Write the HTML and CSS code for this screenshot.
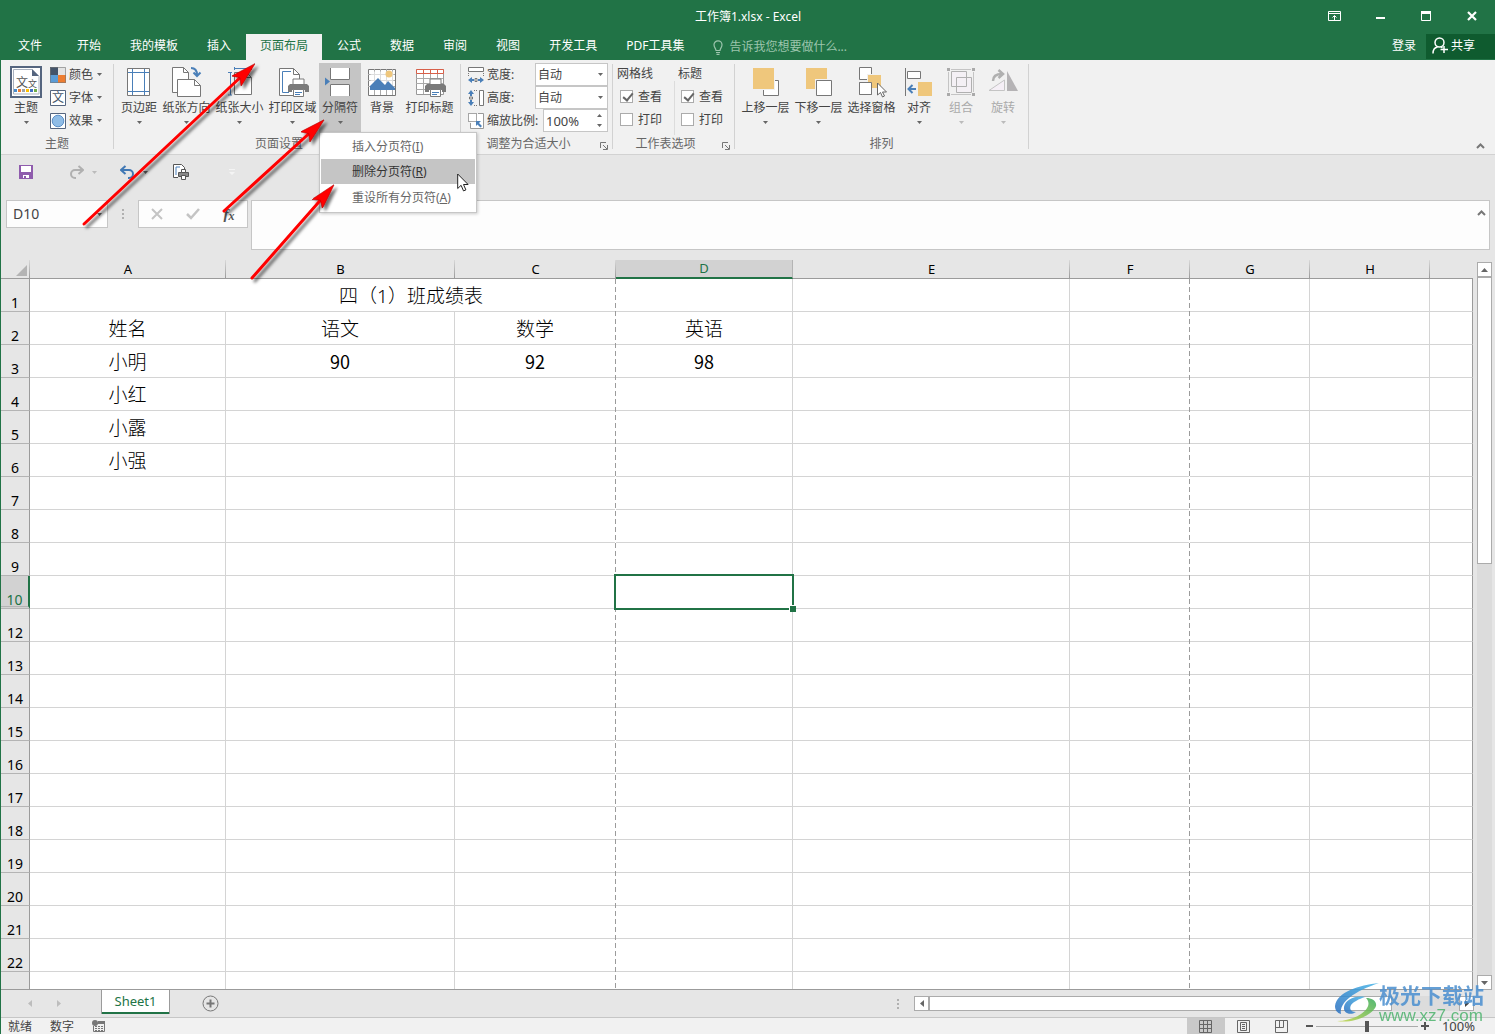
FILE: index.html
```html
<!DOCTYPE html>
<html lang="zh-CN">
<head>
<meta charset="utf-8">
<title>工作簿1.xlsx - Excel</title>
<link rel="stylesheet" href="styles.css">
</head>
<body>
<svg class="defs" aria-hidden="true">
  <symbol id="caret" viewBox="0 0 5 3"><path d="M0 0h5L2.500 3z"/></symbol>
  <symbol id="printer" viewBox="0 0 21 19">
    <path d="M5 1h11v6H5z" fill="#fff" stroke="#7a7a7a"/>
    <path d="M2 6h17l2 2v6h-4v-2H4v2H0V8z" fill="#7a7a7a"/>
    <path d="M5.500 11.500h10v7h-10z" fill="#fff" stroke="#7a7a7a"/>
    <path d="M7 14.500h7M7 16.500h5" stroke="#4a7fb8"/>
  </symbol>
  <symbol id="launcher" viewBox="0 0 8 8"><path d="M.5 6V.5H6M3 3l4 4M7.500 3v4.500H3" fill="none" stroke="#777"/></symbol>
  <symbol id="pointer" viewBox="0 0 12 19"><path d="M.7 1v14.500l3.400-3.200 2.400 5.600 2.400-1-2.400-5.400h4.600z" fill="#fff" stroke="#222"/></symbol>
  <symbol id="chevron" viewBox="0 0 9 6"><path d="M1 5l3.500-3.500L8 5" fill="none" stroke="#777" stroke-width="2"/></symbol>
</svg>

<div class="window">
  <header class="titlebar">
    <h1 class="title">工作簿1.xlsx - Excel</h1>
    <div class="window-buttons">
      <button aria-label="功能区显示选项"><svg width="13" height="10"><path d="M.5.500h12v9H.5zM1 2.500h11M6.500 9V5M4.500 6.500l2-2 2 2" fill="none" stroke="#fff"/></svg></button>
      <button aria-label="最小化"><svg width="9" height="10"><path d="M0 6h9v2H0z" fill="#fff"/></svg></button>
      <button aria-label="最大化"><svg width="10" height="10"><path d="M.5.500h9v9h-9z" fill="none" stroke="#fff"/><path d="M0 0h10v3H0z" fill="#fff"/></svg></button>
      <button aria-label="关闭"><svg width="10" height="10"><path d="M1 1l8 8M9 1L1 9" stroke="#fff" stroke-width="2.200"/></svg></button>
    </div>
  </header>

  <nav class="tabs">
    <button class="tab tab-file">文件</button>
    <button class="tab">开始</button>
    <button class="tab">我的模板</button>
    <button class="tab">插入</button>
    <button class="tab active">页面布局</button>
    <button class="tab">公式</button>
    <button class="tab">数据</button>
    <button class="tab">审阅</button>
    <button class="tab">视图</button>
    <button class="tab">开发工具</button>
    <button class="tab">PDF工具集</button>
    <label class="tell-me">
      <svg width="10" height="15"><path d="M3 10.500C3 8.500 1 7.500 1 4.800a4 4 0 0 1 8 0C9 7.500 7 8.500 7 10.500zM3 12.500h4M3.500 14.300h3" fill="none" stroke="#9cc5ad" stroke-width="1.200"/></svg>
      <input type="text" placeholder="告诉我您想要做什么..." aria-label="告诉我您想要做什么">
    </label>
    <button class="sign-in">登录</button>
    <button class="share"><svg width="16" height="17"><circle cx="7.500" cy="5.500" r="4.500"/><path d="M1 16.500c0-4 2-6 4.500-6.500M9 10l1.500 1M12 9v7M8.500 12.500H16"/></svg>共享</button>
  </nav>

  <section class="ribbon">
    <div class="group group-theme">
      <div class="group-body">
        <button class="big">
          <svg class="icon" viewBox="0 0 32 32"><rect x="1" y="1" width="30" height="30" fill="#fff" stroke="#55657f" stroke-width="2"/><path d="M3.500 28V3.500H22l7 7V28z" fill="#fff" stroke="#a9b1be"/><path d="M22 3v7h7z" fill="#55657f"/><text x="6" y="21" font-size="12" fill="#555">文</text><text x="18" y="21" font-size="9" fill="#555">文</text><path d="M4 23h3v3H4z" fill="#4a8ccb"/><path d="M8 23h3v3H8z" fill="#ed7d31"/><path d="M12 23h3v3h-3z" fill="#a5a5a5"/><path d="M16 23h3v3h-3z" fill="#ffc000"/><path d="M20 23h3v3h-3z" fill="#4472c4"/><path d="M24 23h3v3h-3z" fill="#70ad47"/></svg>
          <span>主题</span><svg class="caret"><use href="#caret"/></svg>
        </button>
        <div class="stack">
          <button class="small"><svg width="16" height="16"><path d="M0 0h8v8H0z" fill="#44546a"/><path d="M8 0h8v8H8z" fill="#e4e4e4"/><path d="M0 8h8v8H0z" fill="#5b9bd5"/><path d="M8 8h8v8H8z" fill="#ed7d31"/><path d="M.5.500h15v15H.5z" fill="none" stroke="#777" stroke-opacity=".6"/></svg>颜色<svg class="caret"><use href="#caret"/></svg></button>
          <button class="small"><svg width="16" height="16"><path d="M.5.500h15v15H.5z" fill="#fff" stroke="#55657f"/><text x="2" y="12" font-size="12" fill="#44546a">文</text></svg>字体<svg class="caret"><use href="#caret"/></svg></button>
          <button class="small"><svg width="16" height="16"><path d="M.5.500h15v15H.5z" fill="#fff" stroke="#55657f"/><circle cx="8" cy="8" r="5.800" fill="#8fbce6" stroke="#5b8fc7"/></svg>效果<svg class="caret"><use href="#caret"/></svg></button>
        </div>
      </div>
      <div class="group-footer"><span>主题</span></div>
    </div>
    <span class="divider"></span>

    <div class="group group-page">
      <div class="group-body">
        <button class="big"><svg class="icon" viewBox="0 0 32 32"><path d="M4.500 2.500h22v27h-22z" fill="#fff" stroke="#777"/><path d="M9.500 3v26M21.500 3v26M5 6.500h21M5 25.500h21" stroke="#4a7fb8"/></svg><span>页边距</span><svg class="caret"><use href="#caret"/></svg></button>
        <button class="big wide"><svg class="icon" viewBox="0 0 32 32"><path d="M1.500 1.500h11l5 5v20h-16z" fill="#fff" stroke="#777"/><path d="M12.500 1.500v5h5" fill="none" stroke="#777"/><path d="M6.500 13.500h17l6 6v11h-23z" fill="#fff" stroke="#777"/><path d="M23.500 13.500v6h6" fill="none" stroke="#777"/><path d="M20 2c4 0 6 2 6 7M22.500 6.500L26 10l3.500-3.500" fill="none" stroke="#4a7fb8" stroke-width="2"/></svg><span>纸张方向</span><svg class="caret"><use href="#caret"/></svg></button>
        <button class="big wide"><svg class="icon" viewBox="0 0 32 32"><path d="M10.500 6.500h12l5 5v17h-17z" fill="#fff" stroke="#777"/><path d="M22.500 6.500v5h5" fill="none" stroke="#777"/><path d="M4 6.500h4M6.500 7v22M4 29h4M10 2.500h18M10.500 1v3M27.500 1v3" fill="none" stroke="#4a7fb8"/></svg><span>纸张大小</span><svg class="caret"><use href="#caret"/></svg></button>
        <button class="big wide"><svg class="icon" viewBox="0 0 32 32"><path d="M2.500 2.500h14l6 6v21h-20z" fill="#fff" stroke="#777"/><path d="M16.500 2.500v6h6" fill="none" stroke="#777"/><path d="M14 5.500H5.500v21H12" fill="none" stroke="#4a7fb8"/><use href="#printer" x="11" y="12" width="21" height="19"/></svg><span>打印区域</span><svg class="caret"><use href="#caret"/></svg></button>
        <div class="menu-anchor">
          <button class="big pressed" aria-expanded="true"><svg class="icon" viewBox="0 0 32 32"><path d="M6 2h20v12H6zM6 18h20v12H6z" fill="#fff"/><path d="M6.500 2v11.500h19V2M6.500 30V18.500h19V30" fill="none" stroke="#777"/><path d="M1 11.500l5 4-5 4z" fill="#4a7fb8"/></svg><span>分隔符</span><svg class="caret"><use href="#caret"/></svg></button>
          <div class="menu" role="menu">
            <button role="menuitem">插入分页符(<u>I</u>)</button>
            <button role="menuitem" class="hover">删除分页符(<u>R</u>)</button>
            <button role="menuitem">重设所有分页符(<u>A</u>)</button>
            <svg class="pointer"><use href="#pointer"/></svg>
          </div>
        </div>
        <button class="big"><svg class="icon" viewBox="0 0 32 32"><path d="M2.500 3.500h27v26h-27z" fill="#fff" stroke="#777"/><path d="M8.500 3v26M14.500 3v26M20.500 3v26M26.500 3v26M2 8.500h27M2 14.500h27M2 20.500h27" stroke="#aaa"/><path d="M4.500 5.500h23v18h-23z" fill="#fff" fill-opacity=".6"/><path d="M4 24v-4l8-8 7 7 3-4 7 7v2z" fill="#4a7fb8"/><circle cx="23" cy="8" r="3.500" fill="#efc77c"/></svg><span>背景</span></button>
        <button class="big wide"><svg class="icon" viewBox="0 0 32 32"><path d="M2.500 3.500h27v25h-27z" fill="#fff" stroke="#999"/><path d="M9.500 7v21M16.500 7v21M23.500 7v21M2 12.500h27M2 17.500h27M2 23.500h27" stroke="#aaa"/><path d="M2.500 3.500h27v4h-27zM9.500 3v4M16.500 3v4M23.500 3v4" fill="#fff" stroke="#d8604a"/><use href="#printer" x="11" y="12" width="21" height="19"/></svg><span>打印标题</span></button>
      </div>
      <div class="group-footer"><span>页面设置</span><button class="launcher" aria-label="页面设置"><svg width="8" height="8"><use href="#launcher"/></svg></button></div>
    </div>
    <span class="divider"></span>

    <div class="group group-scale">
      <div class="group-body form-rows">
        <div class="form-row">
          <svg width="16" height="16"><path d="M.5.500h15v4H.5z" fill="#fff" stroke="#777"/><path d="M.5 6v4M15.500 6v4" stroke="#777" stroke-dasharray="1 1"/><path d="M0 13l4-3v2h2v2H4v2zM16 13l-4-3v2h-2v2h2v2z" fill="#4a7fb8"/><path d="M7 11.500h2v3H7z" fill="none" stroke="#777"/></svg>
          <label for="w">宽度:</label>
          <span class="combo"><select id="w"><option>自动</option></select><svg class="caret"><use href="#caret"/></svg></span>
        </div>
        <div class="form-row">
          <svg width="16" height="16"><path d="M11.500.500h4v15h-4z" fill="#fff" stroke="#777"/><path d="M6 .5h4M6 15.500h4" stroke="#777" stroke-dasharray="1 1"/><path d="M3 0L0 4h2v2h2V4h2zM3 16l-3-4h2v-2h2v2h2z" fill="#4a7fb8"/><path d="M1.500 7h3v2h-3z" fill="none" stroke="#777"/></svg>
          <label for="h">高度:</label>
          <span class="combo"><select id="h"><option>自动</option></select><svg class="caret"><use href="#caret"/></svg></span>
        </div>
        <div class="form-row">
          <svg width="16" height="16"><path d="M10 .5h5.500v15h-13V10" fill="#fff" stroke="#999"/><path d="M.5.500h8v8h-8z" fill="#fff" stroke="#555" stroke-dasharray="1 1"/><path d="M8 8h5l-2 2 3 3-1.500 1.500-3-3L8 13z" fill="#4a7fb8"/></svg>
          <label for="s">缩放比例:</label>
          <span class="spin"><input id="s" type="text" value="100%"><svg width="5" height="13"><path d="M0 3h5L2.500 0zM0 10h5l-2.500 3z" fill="#666"/></svg></span>
        </div>
      </div>
      <div class="group-footer"><span>调整为合适大小</span><button class="launcher" aria-label="调整为合适大小"><svg width="8" height="8"><use href="#launcher"/></svg></button></div>
    </div>
    <span class="divider"></span>

    <div class="group group-options">
      <div class="group-body">
        <fieldset class="checks">
          <legend>网格线</legend>
          <label><input type="checkbox" checked>查看</label>
          <label><input type="checkbox">打印</label>
        </fieldset>
        <fieldset class="checks second">
          <legend>标题</legend>
          <label><input type="checkbox" checked>查看</label>
          <label><input type="checkbox">打印</label>
        </fieldset>
      </div>
      <div class="group-footer"><span>工作表选项</span><button class="launcher" aria-label="工作表选项"><svg width="8" height="8"><use href="#launcher"/></svg></button></div>
    </div>
    <span class="divider"></span>

    <div class="group group-arrange">
      <div class="group-body">
        <button class="big wide"><svg class="icon" viewBox="0 0 32 32"><path d="M13.500 14.500h15v15h-15z" fill="#fff" stroke="#777"/><path d="M2 1h23v23H2z" fill="#f1f1f1"/><path d="M3 2h21v21H3z" fill="#efc77c"/></svg><span>上移一层</span><svg class="caret"><use href="#caret"/></svg></button>
        <button class="big wide"><svg class="icon" viewBox="0 0 32 32"><path d="M3 2h21v21H3z" fill="#efc77c"/><path d="M12 13h18v18H12z" fill="#f1f1f1"/><path d="M13.500 14.500h15v15h-15z" fill="#fff" stroke="#777"/></svg><span>下移一层</span><svg class="caret"><use href="#caret"/></svg></button>
        <button class="big wide"><svg class="icon" viewBox="0 0 32 32"><path d="M3.500 1.500h12v12h-12zM3.500 16.500h12v12h-12z" fill="#fff" stroke="#777"/><path d="M11 8h15v15H11z" fill="#f1f1f1"/><path d="M12 9h13v13H12z" fill="#efc77c"/><path d="M3.500 16.500h12v12h-12z" fill="#fff" stroke="#777"/><path d="M21.500 17v12l3-2.500 2 4.500 2-1-2-4h4z" fill="#fff" stroke="#666"/></svg><span>选择窗格</span></button>
        <button class="big"><svg class="icon" viewBox="0 0 32 32"><path d="M2.500 2v28" stroke="#777"/><path d="M4.500 5.500h13v7h-13z" fill="#fff" stroke="#777"/><path d="M15 16h14v14H15z" fill="#efc77c"/><path d="M13 23H6M9.500 19L5.500 23l4 4" fill="none" stroke="#4a7fb8" stroke-width="2"/></svg><span>对齐</span><svg class="caret"><use href="#caret"/></svg></button>
        <button class="big" disabled><svg class="icon" viewBox="0 0 32 32"><path d="M6 3.500h20M6 28.500h20M3.500 6v20M28.500 6v20" stroke="#c4c4c4"/><path d="M6.500 5.500h15v15h-15zM11.500 11.500h15v15h-15z" fill="#f5eff6" fill-opacity=".7" stroke="#b0b0b0"/><path d="M2 2h3v3H2zM27 2h3v3h-3zM2 27h3v3H2zM27 27h3v3h-3z" fill="#aaa"/></svg><span>组合</span><svg class="caret"><use href="#caret"/></svg></button>
        <button class="big" disabled><svg class="icon" viewBox="0 0 32 32"><path d="M20 5v20h11z" fill="#b5b3b5"/><path d="M17.500 14v10.500H2z" fill="#f5eff6" stroke="#c4c4c4"/><path d="M6 15C6 10 9 8 15 8M11.500 4L16 8l-4.500 4" fill="none" stroke="#b0b0b0" stroke-width="2.500"/></svg><span>旋转</span><svg class="caret"><use href="#caret"/></svg></button>
      </div>
      <div class="group-footer"><span>排列</span></div>
    </div>
    <span class="divider"></span>
    <button class="collapse" aria-label="折叠功能区"><svg width="9" height="6"><use href="#chevron"/></svg></button>
  </section>

  <div class="quick-access">
    <button aria-label="保存"><svg width="14" height="14"><path d="M0 0h14v14H0z" fill="#8f5cad"/><path d="M2 1h10v6H2zM4 10h6v3H4z" fill="#fff"/><path d="M5 11h2v2H5z" fill="#8f5cad"/></svg></button>
    <button class="redo" aria-label="重做"><svg width="15" height="14"><path d="M14 5H6a4 4 0 0 0 0 8h1M9.500 1L14 5l-4.500 4" fill="none" stroke="#b0b0b0" stroke-width="2"/></svg><svg class="caret light"><use href="#caret"/></svg></button>
    <button class="undo" aria-label="撤消"><svg width="15" height="14"><path d="M1 5h8a4 4 0 0 1 0 8H8M5.500 1L1 5l4.500 4" fill="none" stroke="#4178b4" stroke-width="2"/></svg><svg class="caret"><use href="#caret"/></svg></button>
    <button class="preview" aria-label="打印预览"><svg width="17" height="17"><path d="M5 13.500H.5V.500h8l3 3V7" fill="#fff" stroke="#555"/><path d="M3 11V3h4" fill="none" stroke="#4a7fb8"/><path d="M5.500 8.500h10v4h-10z" fill="#888" stroke="#555"/><path d="M8.500 5.500h4v3h-4zM8.500 11.500h4v4h-4z" fill="#fff" stroke="#555"/></svg></button>
    <button aria-label="自定义快速访问工具栏"><svg width="6" height="6"><path d="M0 0h6v1H0zM0 3h6L3 6z" fill="#f4f4f4"/></svg></button>
  </div>

  <div class="formula-bar">
    <span class="name-box"><input type="text" value="D10" aria-label="名称框"><svg class="caret"><use href="#caret"/></svg></span>
    <svg class="grip" width="2" height="11"><path d="M0 0h2v2H0zM0 4h2v2H0zM0 8h2v2H0z" fill="#b0b0b0"/></svg>
    <div class="formula-buttons">
      <button aria-label="取消"><svg width="12" height="12"><path d="M1 1l10 10M11 1L1 11" stroke="#c4c4c4" stroke-width="2"/></svg></button>
      <button aria-label="输入"><svg width="14" height="12"><path d="M1 6l4 4 8-9" fill="none" stroke="#c4c4c4" stroke-width="2.500"/></svg></button>
      <button class="fx" aria-label="插入函数"><i>f</i><i class="sub">x</i></button>
    </div>
    <div class="formula-input"><textarea aria-label="编辑栏"></textarea><svg width="9" height="6"><use href="#chevron"/></svg></div>
  </div>

  <main class="workspace">
    <div class="sheet">
      <table class="grid">
        <colgroup><col class="c-head"><col class="c-a"><col class="c-b"><col class="c-c"><col class="c-d"><col class="c-e"><col class="c-std"><col class="c-std"><col class="c-std"><col></colgroup>
        <thead><tr><th class="corner"><svg width="11" height="11"><path d="M11 0v11H0z" fill="#b4b4b4"/></svg></th><th>A</th><th>B</th><th>C</th><th class="sel">D</th><th>E</th><th>F</th><th>G</th><th>H</th><th class="cut"></th></tr></thead>
        <tbody id="rows"></tbody>
      </table>
      <span class="page-break first"></span>
      <span class="page-break second"></span>
    </div>
    <div class="v-scroll">
      <button aria-label="向上"><svg width="7" height="4"><path d="M0 4h7L3.500 0z" fill="#666"/></svg></button>
      <span class="thumb"></span>
      <button class="end" aria-label="向下"><svg width="7" height="4"><path d="M0 0h7L3.500 4z" fill="#666"/></svg></button>
    </div>
  </main>

  <div class="sheet-bar">
    <button class="nav" aria-label="上一个"><svg width="4" height="7"><path d="M4 0v7L0 3.500z" fill="#bdbdbd"/></svg></button>
    <button class="nav" aria-label="下一个"><svg width="4" height="7"><path d="M0 0v7l4-3.500z" fill="#bdbdbd"/></svg></button>
    <button class="sheet-tab">Sheet1</button>
    <button class="add" aria-label="新工作表"><svg width="17" height="17"><circle cx="8.500" cy="8.500" r="7.500" fill="none" stroke="#777"/><path d="M8.500 4.500v8M4.500 8.500h8" stroke="#777" stroke-width="2"/></svg></button>
    <svg class="grip" width="2" height="10"><path d="M0 0h2v2H0zM0 4h2v2H0zM0 8h2v2H0z" fill="#b0b0b0"/></svg>
    <div class="h-scroll">
      <button aria-label="向左"><svg width="4" height="7"><path d="M4 0v7L0 3.500z" fill="#666"/></svg></button>
      <span class="thumb"></span>
      <button class="end" aria-label="向右"><svg width="4" height="7"><path d="M0 0v7l4-3.500z" fill="#444"/></svg></button>
    </div>
  </div>

  <footer class="status">
    <span>就绪</span>
    <span>数字</span>
    <svg width="13" height="12"><path d="M3 3.500h9.500v8h-11V6" fill="none" stroke="#777"/><path d="M6 1h7v3H6z" fill="#777"/><circle cx="3" cy="3" r="3" fill="#777"/><path d="M3 6.500h8M3 8.500h8M3 10.500h8" stroke="#777" stroke-dasharray="2 1"/></svg>
    <div class="views">
      <button class="on" aria-label="普通"><svg width="13" height="13"><path d="M.5.500h12v12H.5zM4.500 0v13M8.500 0v13M0 4.500h13M0 8.500h13" fill="none" stroke="#666"/></svg></button>
      <button aria-label="页面布局"><svg width="13" height="13"><path d="M.5.500h12v12H.5zM3.500 2.500h6v8h-6zM5 4.500h3M5 6.500h3M5 8.500h3" fill="none" stroke="#666"/></svg></button>
      <button aria-label="分页预览"><svg width="13" height="13"><path d="M.5.500h12v12H.5zM4.500 0v7.500H0M8.500 0v7.500H4" fill="none" stroke="#666"/></svg></button>
    </div>
    <div class="zoom">
      <button aria-label="缩小"><svg width="7" height="8"><path d="M0 3h7v2H0z" fill="#555"/></svg></button>
      <input type="range" min="0" max="200" value="100" aria-label="缩放">
      <button aria-label="放大"><svg width="8" height="8"><path d="M0 3h3V0h2v3h3v2H5v3H3V5H0z" fill="#555"/></svg></button>
    </div>
    <span class="percent">100%</span>
  </footer>

  <svg class="callouts" width="350" height="290" aria-hidden="true">
    <defs>
      <filter id="shade" x="-10%" y="-10%" width="130%" height="130%"><feDropShadow dx="3" dy="3" stdDeviation="1.500" flood-color="#000" flood-opacity=".55"/></filter>
      <marker id="head" viewBox="-26 -7 26 14" refX="-14" refY="0" markerWidth="26" markerHeight="14" markerUnits="userSpaceOnUse" orient="auto"><path d="M0 0l-26 7 5-7-5-7z" fill="#f00" stroke="#a00" stroke-width=".5"/></marker>
    </defs>
    <g filter="url(#shade)" stroke="#f00" stroke-width="3" stroke-linecap="round" fill="none">
      <path d="M84 224L245 73" marker-end="url(#head)"/>
      <path d="M224 211L314 129" marker-end="url(#head)"/>
      <path d="M252 278L325 195" marker-end="url(#head)"/>
    </g>
  </svg>

  <div class="watermark" aria-hidden="true">
    <svg width="44" height="42" viewBox="0 0 44 42">
      <defs>
        <linearGradient id="wb" x1="0" y1="1" x2="1" y2="0"><stop offset="0" stop-color="#2a6fc0"/><stop offset="1" stop-color="#45b5e8"/></linearGradient>
        <linearGradient id="wg" x1="0" y1="1" x2="1" y2="0"><stop offset="0" stop-color="#c9d94a"/><stop offset="1" stop-color="#35ab5c"/></linearGradient>
      </defs>
      <path d="M44 0C24 2 2 9 0 23c0 4 2 7 6 8C4 19 20 8 44 0z" fill="url(#wb)"/>
      <path d="M30 14c-10-2-20 3-21 10-1 6 6 9 12 5-5 0-7-3-5-7 2-3 8-6 14-8z" fill="url(#wb)"/>
      <path d="M2 38c16 3 36-6 39-15 1-5-4-8-10-8 5 5 2 11-5 16-6 4-15 7-24 7z" fill="url(#wg)"/>
    </svg>
    <div><p class="wm-name">极光下载站</p><p class="wm-url">www.xz7.com</p></div>
  </div>
</div>
<script src="grid.js"></script>
</body>
</html>
```

FILE: styles.css
```css
* { box-sizing: border-box; }

body {
  margin: 0;
  font: 12px/16px "Noto Sans", "Noto Sans CJK SC", sans-serif;
  color: #444;
}

button, input, select, textarea {
  font: inherit;
  color: inherit;
  background: none;
  border: 0;
  padding: 0;
  margin: 0;
  border-radius: 0;
  outline: 0;
}

h1, p { margin: 0; }
svg { display: block; flex: none; }
.defs { position: absolute; width: 0; height: 0; }
.caret { width: 5px; height: 3px; fill: #666; }

.window {
  position: relative;
  display: flex;
  flex-direction: column;
  height: 100vh;
  overflow: hidden;
  background: #e6e6e6;
  border-left: 1px solid #217346;
}

/* Title bar and tabs */
.titlebar {
  display: grid;
  grid-template-columns: 1fr auto 1fr;
  height: 34px;
  flex: none;
  background: #217346;
  color: #fff;
}
.title { grid-column: 2; font-size: 12px; font-weight: 400; line-height: 34px; }
.window-buttons { display: flex; justify-content: flex-end; }
.window-buttons button { width: 46px; height: 32px; display: grid; place-items: center; }

.tabs {
  display: flex;
  gap: 1px;
  height: 26px;
  flex: none;
  background: #217346;
  color: #fff;
}
.tab { padding: 0 14px 2px; white-space: nowrap; }
.tab-file { width: 58px; margin-right: 3px; }
.tab.active { background: #f1f1f1; color: #217346; }
.tell-me { display: flex; align-items: center; gap: 6px; flex: 1; padding-left: 14px; }
.tell-me input { flex: 1; min-width: 0; }
.tell-me input::placeholder { color: #9cc5ad; opacity: 1; }
.sign-in { padding: 0 9px 2px; }
.share {
  display: flex;
  gap: 3px;
  align-items: center;
  width: 69px;
  height: 25px;
  padding: 0 0 2px 6px;
  background: #0f5b2f;
}
.share svg { fill: none; stroke: #fff; stroke-width: 1.5; }

/* Ribbon */
.ribbon {
  display: flex;
  flex: none;
  height: 95px;
  background: #f1f1f1;
  border-bottom: 1px solid #d2d2d2;
}
.group { display: flex; flex-direction: column; flex: none; padding-top: 3px; }
.group-theme { width: 112px; padding-left: 4px; }
.group-page { width: 346px; padding-left: 4px; }
.group-scale { width: 151px; padding-left: 7px; }
.group-options { width: 121px; padding-left: 4px; }
.group-arrange { width: 293px; padding-left: 4px; }
.group-body { display: flex; height: 72px; }
.group-footer { display: flex; line-height: 18px; color: #666; }
.group-theme .group-footer, .group-page .group-footer,
.group-options .group-footer, .group-arrange .group-footer { margin-left: -4px; }
.group-scale .group-footer { margin-left: -7px; }
.group-footer span { flex: 1; text-align: center; }
.launcher { width: 16px; display: grid; place-items: end center; padding-bottom: 3px; }
.divider { width: 1px; margin: 4px 0 5px; background: #d2d2d2; }

.big {
  display: flex;
  flex-direction: column;
  align-items: center;
  width: 42px;
  height: 69px;
  padding-top: 3px;
  white-space: nowrap;
}
.big.wide { width: 53px; }
.big .icon { width: 32px; height: 32px; }
.big span { line-height: 20px; margin-bottom: 3px; }
.big.pressed { background: #c5c5c5; }
.big:disabled { color: #aaa; }
.big:disabled .caret { fill: #bbb; }

.stack { display: flex; flex-direction: column; padding-left: 3px; }
.small { display: flex; align-items: center; gap: 3px; height: 23px; }
.small .caret { margin-left: 1px; }

.menu-anchor { position: relative; }
.menu {
  position: absolute;
  z-index: 5;
  top: 69px;
  left: 0;
  display: flex;
  flex-direction: column;
  width: 158px;
  padding: 1px;
  background: #fff;
  border: 1px solid #c6c6c6;
  box-shadow: 1px 1px 3px rgba(0, 0, 0, .2);
}
.menu button { height: 27px; padding-left: 31px; text-align: left; color: #666; }
.menu button:first-child, .menu .hover { height: 25px; }
.menu .hover { background: #c5c5c5; color: #333; }
.pointer { position: absolute; top: 40px; left: 137px; width: 12px; height: 19px; }

.form-rows { flex-direction: column; }
.form-row { display: flex; align-items: center; gap: 3px; height: 23px; padding-right: 4px; white-space: nowrap; }
.combo, .spin { display: grid; align-items: center; height: 23px; margin-left: auto; background: #fff; border: 1px solid #c6c6c6; }
.combo { width: 73px; }
.combo select, .combo .caret { grid-area: 1 / 1; }
.combo select { appearance: none; padding-left: 2px; height: 21px; }
.combo .caret { justify-self: end; margin-right: 4px; pointer-events: none; }
.spin { grid-template-columns: 1fr auto; width: 65px; padding-right: 5px; }
.spin input { width: 100%; padding-left: 2px; font-size: 13px; }

.checks { border: 0; margin: 0; padding: 0; width: 57px; }
.checks.second { width: 60px; padding-left: 4px; background: linear-gradient(#dcdcdc, #dcdcdc) no-repeat 0 7px / 1px 54px; }
.checks legend { padding: 0; line-height: 22px; height: 22px; }
.checks label { display: flex; align-items: center; gap: 5px; height: 23px; padding-left: 3px; }
.checks input {
  appearance: none;
  width: 13px;
  height: 13px;
  background: #fff;
  border: 1px solid #ababab;
}
.checks input:checked::before {
  content: "";
  display: block;
  width: 4px;
  height: 8px;
  margin: 0 0 0 4px;
  border: solid #666;
  border-width: 0 2px 2px 0;
  transform: rotate(40deg);
}
.collapse { margin-left: auto; padding: 0 10px 5px; display: flex; align-items: flex-end; }

/* Quick access toolbar */
.quick-access { display: flex; align-items: center; height: 34px; flex: none; padding-left: 18px; }
.quick-access button { display: flex; align-items: center; gap: 8px; }
.redo { margin-left: 36px; }
.undo { margin-left: 23px; }
.preview { margin: 0 39px 0 25px; }
.caret.light { fill: #bbb; }

/* Formula bar */
.formula-bar { display: flex; flex: none; height: 71px; padding: 11px 5px 10px; }
.name-box {
  display: flex;
  align-items: center;
  width: 102px;
  height: 28px;
  padding: 0 5px 0 6px;
  background: #fdfdfd;
  border: 1px solid #c6c6c6;
  font-size: 14px;
}
.name-box input { flex: 1; min-width: 0; }
.formula-bar .grip { margin: 9px 14px; }
.formula-buttons { display: flex; width: 110px; height: 28px; background: #fdfdfd; border: 1px solid #c6c6c6; }
.formula-buttons button { width: 36px; display: grid; place-items: center; }
.formula-buttons .fx { display: flex; align-items: center; justify-content: center; font: bold 15px/20px "Liberation Serif", serif; color: #555; }
.fx .sub { font-size: 12px; padding-top: 3px; }
.formula-input { display: flex; flex: 1; margin-left: 3px; background: #fdfdfd; border: 1px solid #c6c6c6; }
.formula-input textarea { flex: 1; resize: none; }
.formula-input svg { margin: 9px 3px; }

/* Worksheet */
.workspace { display: flex; flex: 1; min-height: 0; }
.sheet { position: relative; flex: 1; overflow: hidden; background: #fff; border-bottom: 1px solid #9b9b9b; }
.grid { width: 100%; table-layout: fixed; border-collapse: separate; border-spacing: 0; color: #000; }
.c-head { width: 29px; }
.c-a { width: 196px; }
.c-b { width: 229px; }
.c-c { width: 161px; }
.c-d { width: 177px; }
.c-e { width: 277px; }
.c-std { width: 120px; }
.grid th { padding: 0; font-weight: 400; font-size: 13px; background: #e6e6e6; }
.grid thead th {
  height: 19px;
  line-height: 17px;
  border-bottom: 1px solid #9b9b9b;
  background: linear-gradient(#d8d8d8, #9b9b9b) no-repeat right / 1px 100%, #e6e6e6;
}
.grid thead th.cut { background: #e6e6e6; }
.grid thead th.sel { background: #d2d2d2; border-bottom: 2px solid #217346; border-right: 1px solid #b4b4b4; color: #217346; }
.corner svg { margin: 3px 3px 0 auto; }
.grid tbody th {
  height: 33px;
  line-height: 16px;
  font-size: 14px;
  vertical-align: bottom;
  border-right: 1px solid #9b9b9b;
  border-bottom: 1px solid #b4b4b4;
}
.grid tbody th.sel { background: #d2d2d2; border-right: 2px solid #217346; border-bottom: 3px double #b4b4b4; line-height: 12px; color: #217346; }
.grid td {
  padding: 2px 0 0;
  height: 33px;
  line-height: 30px;
  font-size: 19px;
  font-weight: 300;
  text-align: center;
  border-right: 1px solid #d4d4d4;
  border-bottom: 1px solid #d4d4d4;
}
.grid td:last-child { border-right-color: #9b9b9b; }
.grid td.break { border-right-color: transparent; }
.grid td.num { padding: 1px 0; font-family: "Noto Sans CJK SC", sans-serif; font-size: 18px; font-weight: 400; }
.grid td.cell-active { position: relative; z-index: 2; }
.cell-active::before { content: ""; position: absolute; inset: -2px; border: 2px solid #217346; }
.cell-active::after { content: ""; position: absolute; right: -4px; bottom: -4px; width: 6px; height: 6px; background: #217346; border: solid #fff; border-width: 1px 0 0 1px; }
.page-break { position: absolute; top: 19px; bottom: 0; width: 1px; background: repeating-linear-gradient(#9b9b9b 0 5px, #fff 5px 8px); }
.page-break.first { left: 614px; }
.page-break.second { left: 1188px; }

.v-scroll { display: flex; flex-direction: column; width: 15px; margin: 2px 3px 0 4px; background: #dcdcdc; }
.v-scroll button, .h-scroll button { width: 15px; height: 15px; display: grid; place-items: center; background: #fff; border: 1px solid #ababab; flex: none; }
.thumb { background: #fff; border: 1px solid #ababab; }
.v-scroll .thumb { height: 287px; }
.end { margin-top: auto; }

/* Sheet tabs */
.sheet-bar { display: flex; align-items: center; flex: none; height: 28px; padding: 0 21px 0 2px; border-bottom: 1px solid #c6c6c6; }
.nav { width: 29px; padding-left: 25px; }
.sheet-tab {
  align-self: flex-start;
  width: 69px;
  height: 25px;
  margin: -1px 32px 0 40px;
  padding-bottom: 2px;
  background: #fff;
  border: solid #9b9b9b;
  border-width: 0 1px;
  box-shadow: inset 0 -2px #217346;
  font-size: 13px;
  color: #217346;
}
.sheet-bar .grip { margin: 0 15px 0 auto; }
.h-scroll { display: flex; width: 560px; height: 15px; background: #dcdcdc; }
.h-scroll .thumb { flex: 0 0 463px; }
.h-scroll .end { margin: 0 0 0 auto; }

/* Status bar */
.status { display: flex; align-items: center; flex: none; height: 16px; padding: 0 20px 0 7px; gap: 18px; background: #f1f1f1; white-space: nowrap; }
.status > span { padding-top: 1px; line-height: 15px; }
.views { display: flex; margin-left: auto; }
.views button { width: 38px; height: 16px; display: grid; place-items: center; overflow: hidden; }
.views .on { background: #c9c9c9; }
.zoom { display: flex; align-items: center; gap: 3px; margin-left: -13px; }
.zoom input { appearance: none; width: 102px; height: 12px; background: linear-gradient(#ababab, #ababab) no-repeat center / 100% 1px; }
.zoom input::-webkit-slider-thumb { appearance: none; width: 4px; height: 11px; background: #555; }
.percent { margin-left: -5px; font-size: 13px; }

/* Annotations over the window */
.callouts { position: absolute; top: 0; left: -1px; z-index: 10; pointer-events: none; }
.watermark { position: absolute; right: 11px; bottom: 8px; z-index: 10; display: flex; opacity: .85; pointer-events: none; }
.wm-name { font: bold 21px/23px "Noto Sans CJK SC", sans-serif; color: #4a8fd0; }
.wm-url { font: 17px/20px "Liberation Sans", sans-serif; color: #4db36e; }
```

FILE: grid.js
```js
// Fills the worksheet body; row 11 is hidden.
const data = {
  2: ["姓名", "语文", "数学", "英语"],
  3: ["小明", "90", "92", "98"],
  4: ["小红"],
  5: ["小露"],
  6: ["小强"]
};
const columns = 9;
const lastNumbered = 22;
const body = document.getElementById("rows");

for (let n = 1; n <= lastNumbered + 1; n++) {
  if (n === 11) continue;
  const row = body.insertRow();
  const head = document.createElement("th");
  head.textContent = n <= lastNumbered ? n : "";
  if (n === 10) head.className = "sel";
  row.append(head);

  let start = 0;
  if (n === 1) {
    const title = row.insertCell();
    title.colSpan = 4;
    title.textContent = "四（1）班成绩表";
    start = 4;
  }
  for (let c = start; c < columns; c++) {
    const cell = row.insertCell();
    const value = (data[n] || [])[c] || "";
    cell.textContent = value;
    if (/^\d+$/.test(value)) cell.classList.add("num");
    if (c === 2 || c === 5) cell.classList.add("break");
    if (n === 10 && c === 3) cell.classList.add("cell-active");
  }
}
```
